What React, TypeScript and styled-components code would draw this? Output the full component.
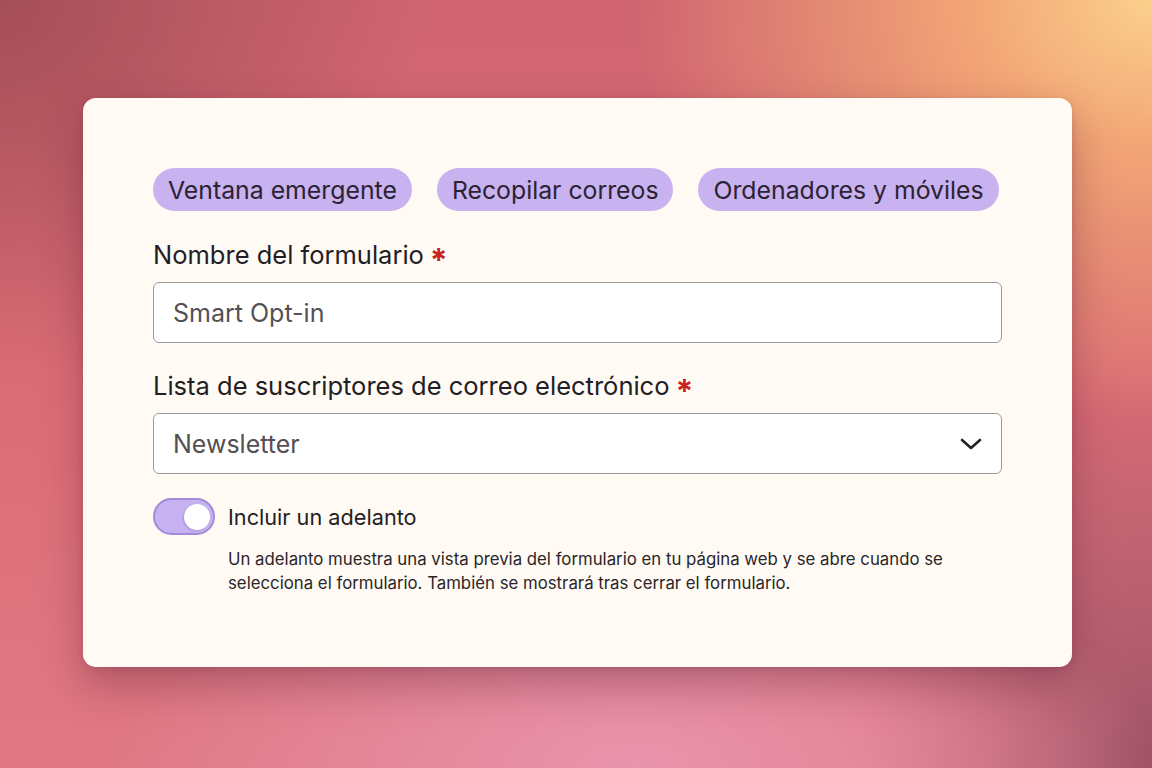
import React from 'react';
import styled, { createGlobalStyle } from 'styled-components';

const GlobalStyle = createGlobalStyle`
  html, body {
    margin: 0;
    padding: 0;
  }
  body {
    font-family: Inter, "Noto Sans", sans-serif;
    -webkit-font-smoothing: antialiased;
  }
`;

const Backdrop = styled.div`
  width: 1152px;
  height: 768px;
  box-sizing: border-box;
  padding: 98px 80px 0 83px;
  background:
    radial-gradient(ellipse 520px 420px at 100% 0%, #fbd08c 0%, rgba(246, 172, 118, 0.9) 35%, rgba(236, 130, 110, 0) 100%),
    radial-gradient(ellipse 420px 380px at 0% 0%, #a54f58 0%, rgba(190, 90, 100, 0) 100%),
    radial-gradient(ellipse 520px 260px at 55% 100%, #e994ad 0%, rgba(230, 140, 165, 0) 100%),
    radial-gradient(ellipse 300px 420px at 100% 100%, #9f5266 0%, rgba(170, 90, 105, 0) 100%),
    linear-gradient(180deg, #cf6470 0%, #dc6d76 55%, #e07985 100%);
  overflow: hidden;
`;

const Card = styled.section`
  width: 989px;
  height: 569px;
  box-sizing: border-box;
  padding: 70px 70px 0 70px;
  background: #fffaf4;
  border-radius: 13px;
  box-shadow: 0 18px 40px rgba(90, 30, 50, 0.35), 0 2px 6px rgba(90, 30, 50, 0.15);
  display: flex;
  flex-direction: column;
`;

const ChipRow = styled.div`
  display: flex;
  gap: 25px;
  margin-bottom: 27px;
`;

const Chip = styled.span`
  display: inline-flex;
  align-items: center;
  flex-shrink: 0;
  white-space: nowrap;
  height: 43px;
  padding: 0 15px;
  border-radius: 22px;
  background: #c8b2ef;
  color: #2b2233;
  font-size: 24.8px;
`;

const Label = styled.label`
  display: flex;
  align-items: center;
  gap: 6px;
  font-size: 25.5px;
  color: #231d24;
  height: 32px;
  margin-bottom: 12px;
`;

const Star = styled.span`
  color: #c8231e;
  font-size: 32px;
  font-weight: 700;
  line-height: 1;
  position: relative;
  top: 7px;
`;

const Field = styled.div<{ $gap?: number }>`
  display: flex;
  align-items: center;
  justify-content: space-between;
  height: 61px;
  box-sizing: border-box;
  padding: 0 19px;
  border: 1.5px solid #9c9a9a;
  border-radius: 6px;
  background: #ffffff;
  font-size: 25px;
  color: #545054;
  margin-bottom: ${(p) => p.$gap ?? 0}px;
`;

const ToggleRow = styled.div`
  display: flex;
  align-items: center;
  gap: 13px;
  margin-top: 24px;
`;

const Toggle = styled.div`
  width: 62px;
  height: 37px;
  box-sizing: border-box;
  border-radius: 19px;
  background: #c7b2f1;
  border: 2.5px solid #a48ad8;
  display: flex;
  align-items: center;
  justify-content: flex-end;
  padding-right: 3px;
`;

const Knob = styled.span`
  width: 26px;
  height: 26px;
  border-radius: 50%;
  background: #ffffff;
  box-shadow: -1px 1px 2px rgba(80, 50, 120, 0.25);
`;

const ToggleText = styled.span`
  font-size: 21.7px;
  color: #231d24;
`;

const Help = styled.p`
  margin: 12px 0 0 75px;
  font-size: 16.8px;
  line-height: 24px;
  color: #2a2528;
  max-width: 770px;
`;

const App = () => (
  <Backdrop>
    <GlobalStyle />
    <Card>
      <ChipRow>
        <Chip>Ventana emergente</Chip>
        <Chip>Recopilar correos</Chip>
        <Chip>Ordenadores y móviles</Chip>
      </ChipRow>
      <Label>
        Nombre del formulario <Star>*</Star>
      </Label>
      <Field $gap={26}>Smart Opt-in</Field>
      <Label>
        Lista de suscriptores de correo electrónico <Star>*</Star>
      </Label>
      <Field>
        Newsletter
        <svg width="22" height="14" viewBox="0 0 22 14" fill="none">
          <path d="M2 3 L11 11 L20 3" stroke="#222" strokeWidth="2.6" strokeLinecap="round" strokeLinejoin="round" />
        </svg>
      </Field>
      <ToggleRow>
        <Toggle>
          <Knob />
        </Toggle>
        <ToggleText>Incluir un adelanto</ToggleText>
      </ToggleRow>
      <Help>
        Un adelanto muestra una vista previa del formulario en tu página web y se abre cuando se
        selecciona el formulario. También se mostrará tras cerrar el formulario.
      </Help>
    </Card>
  </Backdrop>
);

export default App;
